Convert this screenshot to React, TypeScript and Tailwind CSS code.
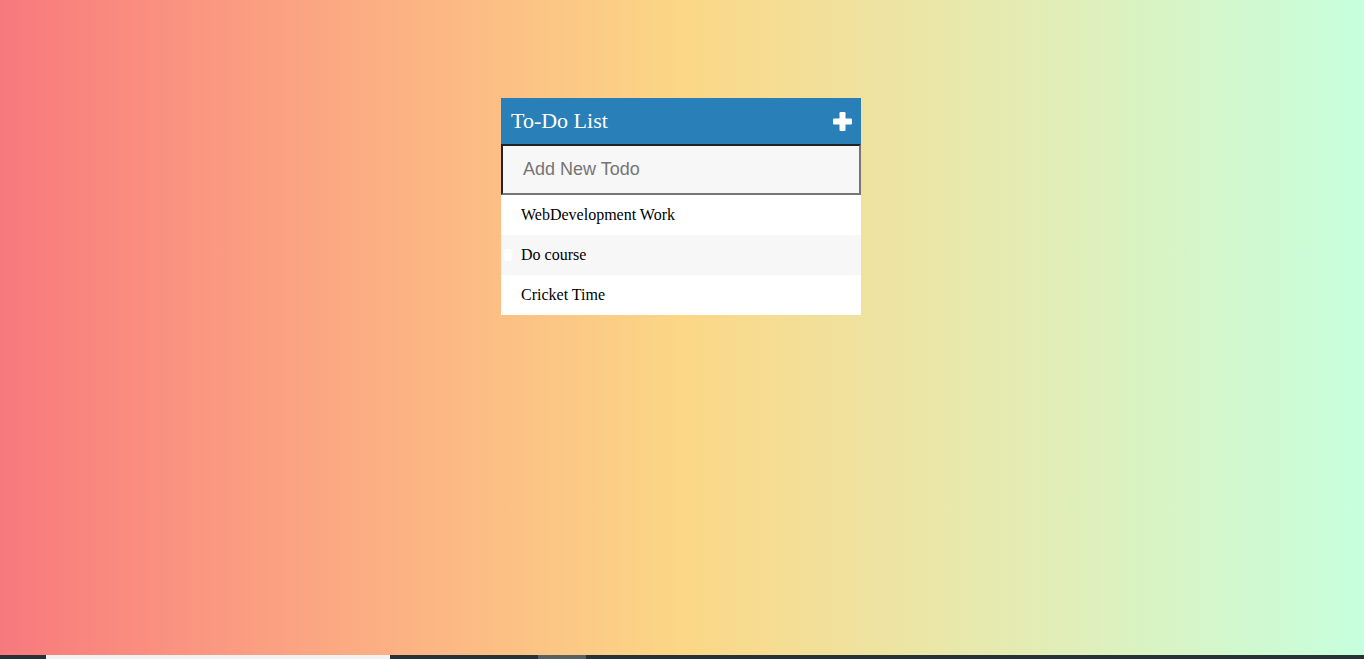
import { useState } from "react";

const todos = ["WebDevelopment Work", "Do course", "Cricket Time"];

function PlusIcon() {
  return (
    <svg width="19" height="19" viewBox="0 0 19 19" fill="white">
      <rect x="6.5" y="0" width="6" height="19" rx="1.2" />
      <rect x="0" y="6.5" width="19" height="6" rx="1.2" />
    </svg>
  );
}

function TrashIcon() {
  return (
    <svg width="10" height="12" viewBox="0 0 10 12" fill="white">
      <rect x="0" y="1" width="10" height="1.6" rx="0.4" />
      <rect x="3.2" y="0" width="3.6" height="1.4" rx="0.4" />
      <path d="M1 3.3h8l-0.6 8.1a0.7 0.7 0 0 1-0.7 0.6H2.3a0.7 0.7 0 0 1-0.7-0.6z" />
    </svg>
  );
}

export default function App() {
  const [hovered] = useState(1);

  return (
    <div className="relative h-[659px] w-full overflow-hidden bg-gradient-to-r from-[#f7797d] via-[#fbd786] to-[#c6ffdd]">
      <div className="flex justify-center pt-[98px] pr-[2px]">
        <div className="w-[360px]">
          {/* header */}
          <div className="flex h-[46px] items-center justify-between bg-[#2980b9] pl-[10px] pr-[9px] text-white">
            <h1 className="text-[22px] leading-none font-['Liberation_Serif',serif] font-normal">
              To-Do List
            </h1>
            <PlusIcon />
          </div>

          <input
            type="text"
            placeholder="Add New Todo"
            className="block h-[51px] w-full border-2 border-t-[#222] border-l-[#222] border-b-[#767676] border-r-[#767676] bg-[#f7f7f7] px-[20px] text-[18px] font-['Liberation_Sans',Arial,sans-serif] text-[#666] placeholder:text-[#757575] outline-none"
          />

          <ul className="font-['Liberation_Serif',serif] text-[16px] text-black">
            {todos.map((t, i) => (
              <li
                key={t}
                className={`flex h-[40px] items-center ${i % 2 === 1 ? "bg-[#f7f7f7]" : "bg-white"}`}
              >
                <span className="flex w-[20px] items-center justify-start pl-[2px]">
                  {i === hovered ? <TrashIcon /> : null}
                </span>
                <span>{t}</span>
              </li>
            ))}
          </ul>
        </div>
      </div>

      {/* bottom strip */}
      <div className="absolute bottom-0 left-0 flex h-[4px] w-full bg-[#263238]">
        <div className="ml-[46px] w-[344px] bg-[#f2f2f2]" />
        <div className="ml-[148px] w-[48px] bg-[#5a5f60]" />
      </div>
    </div>
  );
}
